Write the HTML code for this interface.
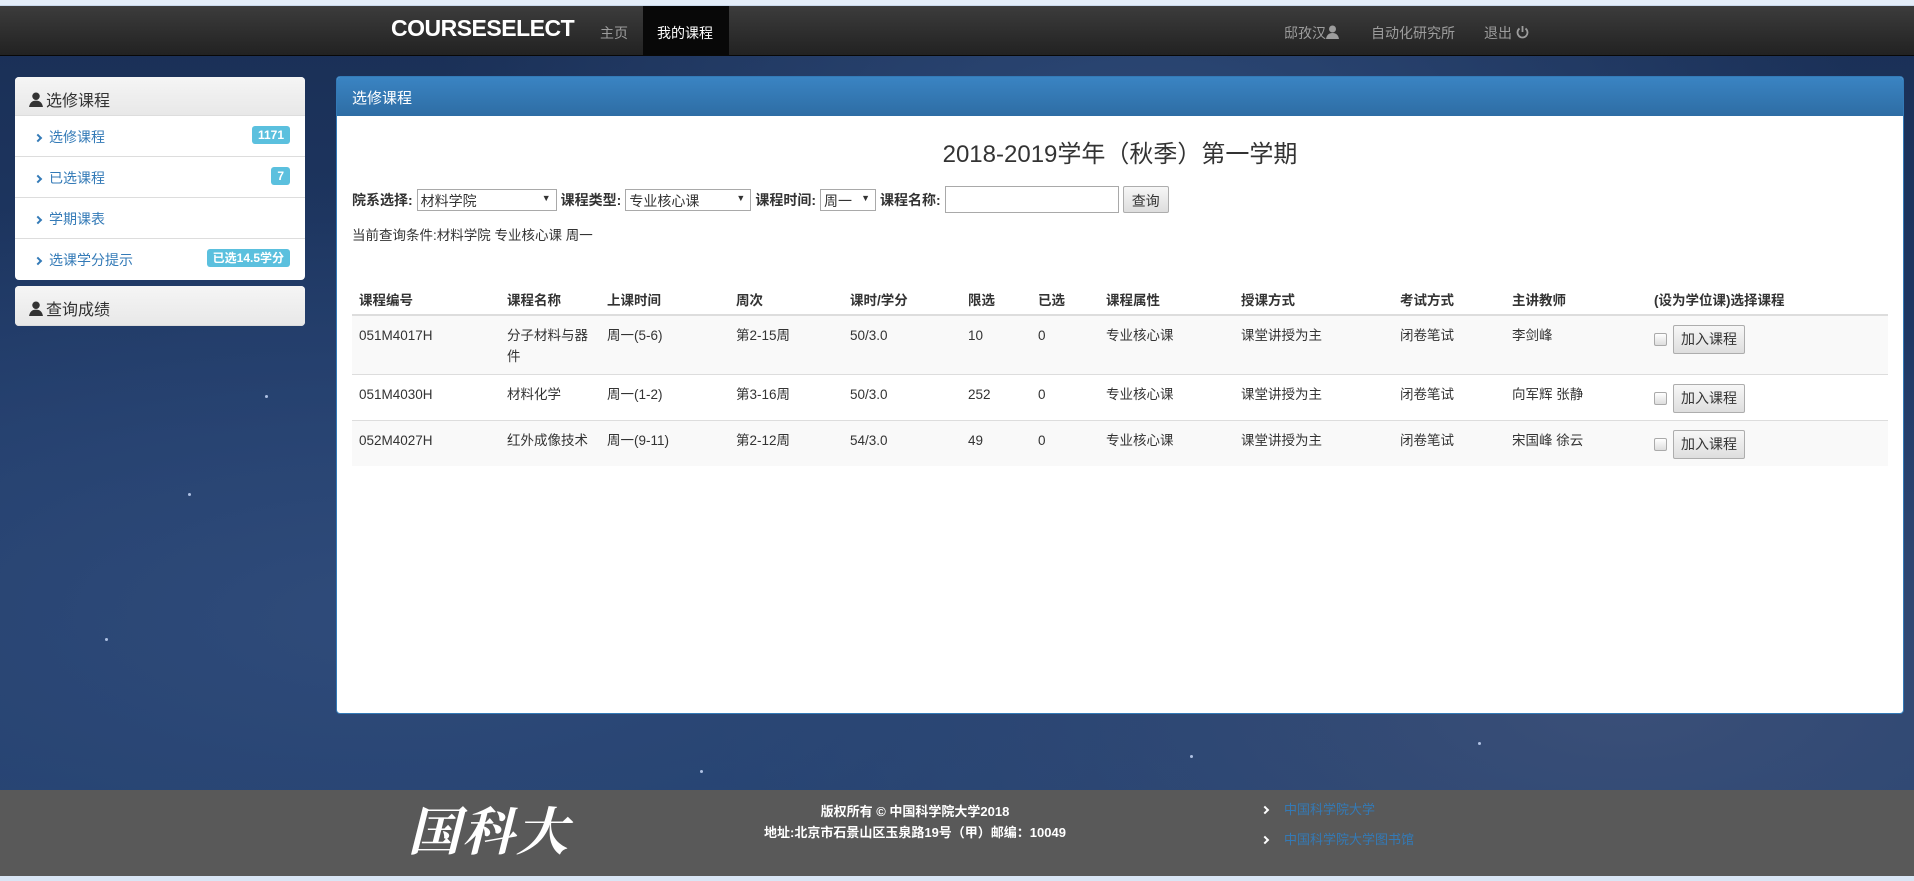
<!DOCTYPE html>
<html><head><meta charset="utf-8">
<style>
*{box-sizing:border-box;margin:0;padding:0}
body{width:1914px;height:881px;overflow:hidden;position:relative;font-family:"Liberation Sans","Noto Sans CJK SC",sans-serif;font-size:14px;color:#333;
background:radial-gradient(ellipse at 60% 20%,#2e4a78 0%,rgba(30,55,95,0) 45%),radial-gradient(ellipse at 20% 70%,#2f4b7a 0%,rgba(0,0,0,0) 50%),radial-gradient(ellipse at 85% 80%,#3a4f78 0%,rgba(0,0,0,0) 40%),linear-gradient(180deg,#1a2f55 0%,#1f3a68 50%,#22406e 100%);}
.topstrip{position:absolute;left:0;top:0;width:1914px;height:6px;background:#e3edf8;border-bottom:1px solid #c9d9ec}
.nav{position:absolute;left:0;top:6px;width:1914px;height:50px;background:linear-gradient(#3c3c3c,#222);border-bottom:1px solid #080808}
.brand{position:absolute;left:391px;top:9px;color:#fff;font-size:23px;font-weight:bold;letter-spacing:-0.5px}
.nav a{position:absolute;top:17px;color:#9d9d9d;font-size:14px;text-decoration:none}
.active{position:absolute;left:643px;top:0;width:86px;height:50px;background:#080808}
.panel{position:absolute;background:#fff;border-radius:4px}
.sb{left:15px;width:290px}
.sbh{height:39px;background:linear-gradient(#f5f5f5,#e8e8e8);border-bottom:1px solid #ddd;border-radius:4px 4px 0 0;font-size:16px;padding:10px 0 0 14px;color:#333}
.sbh svg{margin-right:3px;vertical-align:-1px}
.item{height:41px;border-bottom:1px solid #ddd;padding:11px 0 0 20px;color:#337ab7;font-size:14px;position:relative}
.item:last-child{border-bottom:none}
.chev{display:inline-block;width:6px;height:6px;border-right:2px solid #337ab7;border-bottom:2px solid #337ab7;transform:rotate(-45deg);margin-right:8px;position:relative;top:-1px}
.badge{position:absolute;right:15px;top:10px;background:#5bc0de;color:#fff;font-size:12px;font-weight:bold;border-radius:3px;padding:2px 6px;line-height:14px}
.main{left:336px;top:76px;width:1568px;height:638px;border:1px solid #337ab7}
.mh{height:39px;background:linear-gradient(#3a84c3,#2e6da4);color:#fff;font-size:15px;padding:10px 0 0 15px;border-radius:3px 3px 0 0}
h2{position:absolute;left:0;width:100%;top:57px;text-align:center;font-weight:normal;font-size:24px;color:#333}
.filters{position:absolute;left:15px;top:109px;font-size:14px;font-weight:bold;display:flex;align-items:center}
.sel{display:inline-block;height:22px;border:1px solid #a9a9a9;font-weight:normal;font-size:14px;padding:1px 3px;position:relative;margin:0 4px 0 4px;background:#fff}
.sel:after{content:"▼";position:absolute;right:5px;top:3px;font-size:9px}
.inp{width:174px;height:27px;border:1px solid #a9a9a9;margin:0 4px}
.btn{height:27px;border:1px solid #adadad;background:linear-gradient(#f7f7f7,#dedede);font-weight:normal;padding:4px 8px;font-size:14px;border-radius:2px}
.cond{position:absolute;left:15px;top:147px;font-size:13.5px}
table{position:absolute;left:15px;top:206px;width:1536px;border-collapse:collapse;font-size:13.5px}
th{text-align:left;font-weight:bold;height:32px;border-bottom:2px solid #ddd;padding:0 7px;vertical-align:middle}
td{padding:9px 7px 7px;vertical-align:top;border-top:1px solid #ddd;line-height:21px}
tr.o td{background:#f9f9f9}
.cb{display:inline-block;width:13px;height:13px;border:1px solid #aaa;border-radius:2px;background:linear-gradient(#fff,#ddd);vertical-align:middle;margin-right:6px}
.add{display:inline-block;border:1px solid #adadad;background:linear-gradient(#f7f7f7,#dedede);padding:3px 7px;font-size:14px;border-radius:2px;vertical-align:middle;color:#333}
.footer{position:absolute;left:0;top:790px;width:1914px;height:86px;background:#595959;color:#fff}
.bstrip{position:absolute;left:0;top:876px;width:1914px;height:5px;background:#d9e6f5}
.logo{position:absolute;left:408px;top:0px;font-family:"Noto Serif CJK SC",serif;font-size:52px;font-weight:bold;font-style:italic;letter-spacing:2px;color:#fff}
.copy{position:absolute;left:700px;width:430px;text-align:center;font-size:13px;font-weight:bold;line-height:21px;top:11px}
.links{position:absolute;left:1262px;top:5px;font-size:13px;color:#337ab7;line-height:30px}
.links .chev{border-color:#fff;margin-right:16px}
.dot{position:absolute;width:3px;height:3px;border-radius:50%;background:#cfe0ff;opacity:.8}
</style></head><body>
<div class="topstrip"></div>
<div class="nav">
<div class="active"></div>
<div class="brand">COURSESELECT</div>
<a style="left:600px">主页</a>
<a style="left:657px;color:#fff">我的课程</a>
<a style="left:1284px">邸孜汉<svg width="13" height="14" viewBox="0 0 13 14" style="vertical-align:-1px"><circle cx="6.5" cy="4" r="3.5" fill="#9d9d9d"/><path d="M0 14 Q1 8 6.5 8 Q12 8 13 14Z" fill="#9d9d9d"/></svg></a>
<a style="left:1371px">自动化研究所</a>
<a style="left:1484px">退出 <svg width="13" height="14" viewBox="0 0 13 14" style="vertical-align:-1px"><path d="M3.5 3.5 A5 5 0 1 0 9.5 3.5" fill="none" stroke="#9d9d9d" stroke-width="1.8"/><line x1="6.5" y1="1" x2="6.5" y2="7" stroke="#9d9d9d" stroke-width="1.8"/></svg></a>
</div>

<div class="dot" style="left:188px;top:493px"></div><div class="dot" style="left:105px;top:638px"></div>
<div class="dot" style="left:1190px;top:755px"></div><div class="dot" style="left:1478px;top:742px"></div>
<div class="dot" style="left:700px;top:770px"></div><div class="dot" style="left:1840px;top:90px"></div>
<div class="dot" style="left:265px;top:395px"></div>

<div class="panel sb" style="top:77px;height:203px">
<div class="sbh"><svg width="14" height="15" viewBox="0 0 13 14"><circle cx="6.5" cy="4" r="3.5" fill="#333"/><path d="M0 14 Q1 8 6.5 8 Q12 8 13 14Z" fill="#333"/></svg>选修课程</div>
<div class="item"><span class="chev"></span>选修课程<span class="badge">1171</span></div>
<div class="item"><span class="chev"></span>已选课程<span class="badge">7</span></div>
<div class="item"><span class="chev"></span>学期课表</div>
<div class="item"><span class="chev"></span>选课学分提示<span class="badge">已选14.5学分</span></div>
</div>
<div class="panel sb" style="top:286px;height:40px">
<div class="sbh" style="border-radius:4px;height:40px"><svg width="14" height="15" viewBox="0 0 13 14"><circle cx="6.5" cy="4" r="3.5" fill="#333"/><path d="M0 14 Q1 8 6.5 8 Q12 8 13 14Z" fill="#333"/></svg>查询成绩</div>
</div>

<div class="panel main">
<div class="mh">选修课程</div>
<h2>2018-2019学年（秋季）第一学期</h2>
<div class="filters">院系选择:<span class="sel" style="width:140px">材料学院</span>课程类型:<span class="sel" style="width:126px">专业核心课</span>课程时间:<span class="sel" style="width:56px">周一</span>课程名称:<span class="inp"></span><span class="btn">查询</span></div>
<div class="cond">当前查询条件:材料学院 专业核心课 周一</div>
<table>
<tr><th style="width:148px">课程编号</th><th style="width:100px">课程名称</th><th style="width:129px">上课时间</th><th style="width:114px">周次</th><th style="width:118px">课时/学分</th><th style="width:70px">限选</th><th style="width:68px">已选</th><th style="width:135px">课程属性</th><th style="width:159px">授课方式</th><th style="width:112px">考试方式</th><th style="width:142px">主讲教师</th><th>(设为学位课)选择课程</th></tr>
<tr class="o" style="height:56px"><td>051M4017H</td><td>分子材料与器件</td><td>周一(5-6)</td><td>第2-15周</td><td>50/3.0</td><td>10</td><td>0</td><td>专业核心课</td><td>课堂讲授为主</td><td>闭卷笔试</td><td>李剑峰</td><td><span class="cb"></span><span class="add">加入课程</span></td></tr>
<tr style="height:42px"><td>051M4030H</td><td>材料化学</td><td>周一(1-2)</td><td>第3-16周</td><td>50/3.0</td><td>252</td><td>0</td><td>专业核心课</td><td>课堂讲授为主</td><td>闭卷笔试</td><td>向军辉 张静</td><td><span class="cb"></span><span class="add">加入课程</span></td></tr>
<tr class="o" style="height:43px"><td>052M4027H</td><td>红外成像技术</td><td>周一(9-11)</td><td>第2-12周</td><td>54/3.0</td><td>49</td><td>0</td><td>专业核心课</td><td>课堂讲授为主</td><td>闭卷笔试</td><td>宋国峰 徐云</td><td><span class="cb"></span><span class="add">加入课程</span></td></tr>
</table>
</div>

<div class="footer">
<div class="logo">国科大</div>
<div class="copy">版权所有 © 中国科学院大学2018<br>地址:北京市石景山区玉泉路19号（甲）邮编：10049</div>
<div class="links"><div><span class="chev"></span>中国科学院大学</div><div><span class="chev"></span>中国科学院大学图书馆</div></div>
</div>
<div class="bstrip"></div>
</body></html>
